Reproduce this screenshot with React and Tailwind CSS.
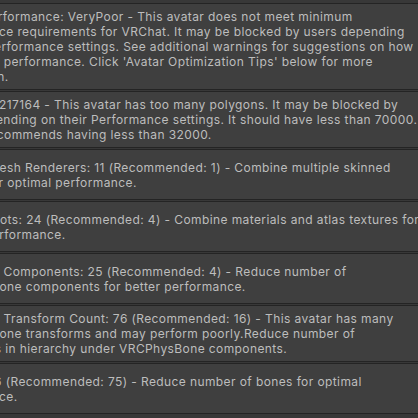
import React from 'react';

const warnings = [
  {
    id: 'overall',
    lines: [
      'Overall Performance: VeryPoor - This avatar does not meet minimum',
      'performance requirements for VRChat. It may be blocked by users depending',
      'on their Performance settings. See additional warnings for suggestions on how',
      "to improve performance. Click 'Avatar Optimization Tips' below for more",
      'information.',
    ],
  },
  {
    id: 'polygons',
    lines: [
      'Polygons: 217164 - This avatar has too many polygons. It may be blocked by',
      'users depending on their Performance settings. It should have less than 70000.',
      'VRChat recommends having less than 32000.',
    ],
  },
  {
    id: 'skinned',
    lines: [
      'Skinned Mesh Renderers: 11 (Recommended: 1) - Combine multiple skinned',
      'meshes for optimal performance.',
    ],
  },
  {
    id: 'materials',
    lines: [
      'Material Slots: 24 (Recommended: 4) - Combine materials and atlas textures for',
      'optimal performance.',
    ],
  },
  {
    id: 'physbones',
    lines: [
      'Phys Bone Components: 25 (Recommended: 4) - Reduce number of',
      'VRCPhysBone components for better performance.',
    ],
  },
  {
    id: 'transforms',
    lines: [
      'Phys Bone Transform Count: 76 (Recommended: 16) - This avatar has many',
      'VRCPhysBone transforms and may perform poorly.Reduce number of',
      'transforms in hierarchy under VRCPhysBone components.',
    ],
  },
  {
    id: 'bones',
    lines: [
      'Bones: 126 (Recommended: 75) - Reduce number of bones for optimal',
      'performance.',
    ],
  },
];

// Unity-style help box; the warning icon column sits off to the left
function HelpBox({ lines }) {
  return (
    <div className="flex items-center min-h-[51px] py-[5px] border-y border-[#242424] bg-[#3f3f3f]">
      <div className="ml-[-64px] text-[12px] leading-[15px] tracking-[0.4px] text-[#bdbdbd] whitespace-nowrap">
        {lines.map((line, i) => (
          <div key={i}>{line}</div>
        ))}
      </div>
    </div>
  );
}

export default function App() {
  return (
    <div
      className="w-[418px] h-[418px] overflow-hidden bg-[#383838] pt-[3px] flex flex-col gap-[1px]"
      style={{ fontFamily: 'Inter, "Noto Sans", sans-serif' }}
    >
      {warnings.map((w) => (
        <HelpBox key={w.id} lines={w.lines} />
      ))}
    </div>
  );
}
